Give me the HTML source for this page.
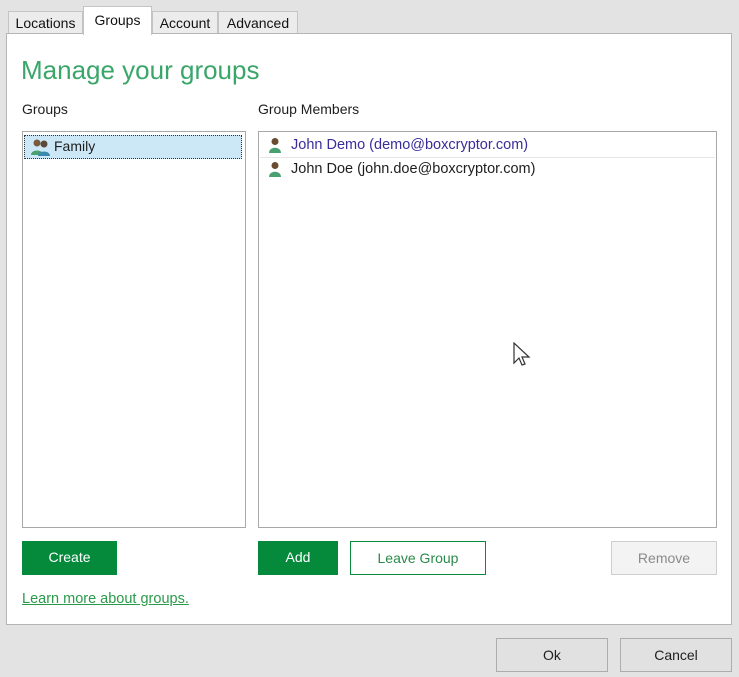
<!DOCTYPE html>
<html><head><meta charset="utf-8"><style>
*{box-sizing:border-box;margin:0;padding:0}
body{width:739px;height:677px;background:#e3e3e3;font-family:"Liberation Sans",sans-serif;font-size:14px;color:#1e1e1e;position:relative;overflow:hidden}
.a{position:absolute}
.tab{position:absolute;background:#ececec;border:1px solid #c4c4c4;border-bottom:none;font-size:14px;text-align:center;line-height:22px;color:#111}
.panel{left:6px;top:33px;width:726px;height:592px;background:#fff;border:1px solid #b5b5b5}
.list{background:#fff;border:1px solid #a8a8a8}
.btn{position:absolute;height:34px;line-height:33px;text-align:center;font-size:14px}
.g{background:#058a3c;color:#fff}
</style></head><body>
<div class="tab" style="left:8px;top:11px;width:75px;height:23px">Locations</div>
<div class="tab" style="left:83px;top:6px;width:69px;height:29px;background:#fff;z-index:2;line-height:26px">Groups</div>
<div class="tab" style="left:152px;top:11px;width:66px;height:23px">Account</div>
<div class="tab" style="left:218px;top:11px;width:80px;height:23px">Advanced</div>
<div class="a panel"></div>
<div class="a" style="left:21px;top:55px;font-size:26px;color:#3aa66a">Manage your groups</div>
<div class="a" style="left:22px;top:101px">Groups</div>
<div class="a" style="left:258px;top:101px">Group Members</div>
<div class="a list" style="left:22px;top:131px;width:224px;height:397px"></div>
<div class="a" style="left:24px;top:135px;width:218px;height:24px;background:#cce8f7;border:1px dotted #333"></div>
<svg class="a" style="left:31px;top:138px" width="20" height="18" viewBox="0 0 20 18"><circle cx="6" cy="5" r="3.5" fill="#7a5a3a"/><path d="M0 17c0-6 12-6 12 0z" fill="#4aa070"/><circle cx="13" cy="6" r="3.5" fill="#5a4a3a"/><path d="M7 18c0-6 12-6 12 0z" fill="#3a8ab0"/></svg>
<div class="a" style="left:54px;top:138px">Family</div>
<div class="a list" style="left:258px;top:131px;width:459px;height:397px"></div>
<div class="a" style="left:260px;top:157px;width:455px;height:1px;background:#e6e6e6"></div>
<svg class="a" style="left:268px;top:137px" width="14" height="16" viewBox="0 0 14 16"><circle cx="7" cy="4.5" r="3.5" fill="#6a4a30"/><path d="M1 16c0-7 12-7 12 0z" fill="#4aa070"/></svg>
<div class="a" style="left:291px;top:137px;color:#3a2d9a;font-size:14.5px">John Demo (demo@boxcryptor.com)</div>
<svg class="a" style="left:268px;top:161px" width="14" height="16" viewBox="0 0 14 16"><circle cx="7" cy="4.5" r="3.5" fill="#6a4a30"/><path d="M1 16c0-7 12-7 12 0z" fill="#4aa070"/></svg>
<div class="a" style="left:291px;top:161px;font-size:14.5px">John Doe (john.doe@boxcryptor.com)</div>
<svg class="a" style="left:513px;top:342px" width="18" height="26" viewBox="0 0 18 26"><path d="M1 1v20l5-5 3 7 3-1-3-7h7z" fill="#fff" stroke="#333" stroke-width="1.2"/></svg>
<div class="btn g" style="left:22px;top:541px;width:95px">Create</div>
<div class="btn g" style="left:258px;top:541px;width:80px">Add</div>
<div class="btn" style="left:350px;top:541px;width:136px;border:1px solid #0a8a3c;color:#2a8a4a;background:#fff">Leave Group</div>
<div class="btn" style="left:611px;top:541px;width:106px;border:1px solid #cfcfcf;background:#f3f3f3;color:#8a8a8a">Remove</div>
<div class="a" style="left:22px;top:591px;color:#2a9a4a;text-decoration:underline;font-size:14.5px">Learn more about groups.</div>
<div class="btn" style="left:496px;top:638px;width:112px;border:1px solid #adadad;background:#e1e1e1">Ok</div>
<div class="btn" style="left:620px;top:638px;width:112px;border:1px solid #adadad;background:#e1e1e1">Cancel</div>
</body></html>
